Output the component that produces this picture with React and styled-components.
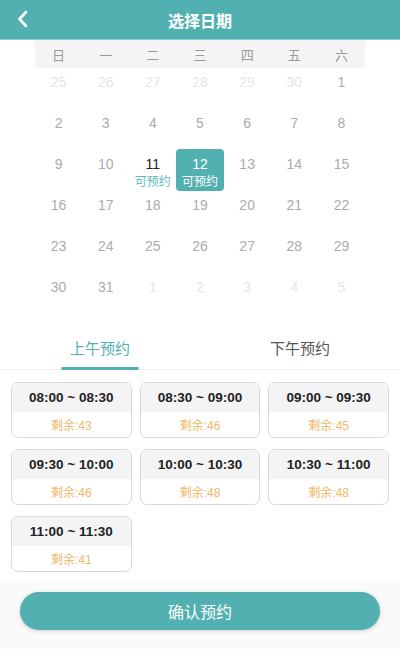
import React, { useState } from "react";
import styled, { createGlobalStyle } from "styled-components";

const GlobalStyle = createGlobalStyle`
  body {
    margin: 0;
    background: #fff;
    font-family: "Liberation Sans", "Noto Sans CJK SC", sans-serif;
  }
`;

const weekdays = ["日", "一", "二", "三", "四", "五", "六"];

const days = [
  [25, 26, 27, 28, 29, 30, 1],
  [2, 3, 4, 5, 6, 7, 8],
  [9, 10, 11, 12, 13, 14, 15],
  [16, 17, 18, 19, 20, 21, 22],
  [23, 24, 25, 26, 27, 28, 29],
  [30, 31, 1, 2, 3, 4, 5],
];

const slots = [
  ["08:00 ~ 08:30", 43],
  ["08:30 ~ 09:00", 46],
  ["09:00 ~ 09:30", 45],
  ["09:30 ~ 10:00", 46],
  ["10:00 ~ 10:30", 48],
  ["10:30 ~ 11:00", 48],
  ["11:00 ~ 11:30", 41],
];

const App = () => {
  const [tab, setTab] = useState(0);

  return (
    <Page>
      <GlobalStyle />
      <Header>
        <BackButton>
          <svg width="14" height="18" viewBox="0 0 14 18">
            <path
              d="M10 2 L3.5 9 L10 16"
              fill="none"
              stroke="#fff"
              strokeWidth="2.6"
              strokeLinecap="round"
              strokeLinejoin="round"
            />
          </svg>
        </BackButton>
        <Title>选择日期</Title>
      </Header>

      <Calendar>
        <WeekRow>
          {weekdays.map((w) => (
            <WeekDay key={w}>{w}</WeekDay>
          ))}
        </WeekRow>
        {days.map((row, r) => (
          <DayRow key={r}>
            {row.map((d, c) => {
              const other = (r === 0 && d > 7) || (r === 5 && d < 7);
              const available = r === 2 && (d === 11 || d === 12);
              const selected = r === 2 && d === 12;
              return (
                <DayCell key={c} $selected={selected}>
                  <DayNum $other={other} $available={available} $selected={selected}>
                    {d}
                  </DayNum>
                  {available && <DayTag $selected={selected}>可预约</DayTag>}
                </DayCell>
              );
            })}
          </DayRow>
        ))}
      </Calendar>

      <Tabs>
        {["上午预约", "下午预约"].map((t, i) => (
          <Tab key={t} $active={tab === i} onClick={() => setTab(i)}>
            {t}
          </Tab>
        ))}
      </Tabs>

      <SlotGrid>
        {slots.map(([time, left]) => (
          <SlotCard key={time}>
            <SlotTime>{time}</SlotTime>
            <SlotLeft>剩余:{left}</SlotLeft>
          </SlotCard>
        ))}
      </SlotGrid>

      <Footer>
        <ConfirmButton>确认预约</ConfirmButton>
      </Footer>
    </Page>
  );
};

export default App;

const Page = styled.div`
  width: 400px;
  min-height: 664px;
  background: #fff;
`;

const Header = styled.div`
  height: 40px;
  background: #52b1b0;
  display: flex;
  align-items: center;
  justify-content: center;
  position: relative;
  border-bottom: 1px solid #8ccccb;
  box-sizing: border-box;
`;

const BackButton = styled.div`
  position: absolute;
  left: 16px;
  top: 10px;
  display: flex;
`;

const Title = styled.div`
  color: #fff;
  font-size: 16px;
  font-weight: bold;
  font-family: "Noto Sans CJK SC", sans-serif;
`;

const Calendar = styled.div`
  width: 330px;
  margin: 0 auto;
`;

const WeekRow = styled.div`
  display: grid;
  grid-template-columns: repeat(7, 1fr);
  height: 28px;
  background: #f4f4f4;
  align-items: center;
`;

const WeekDay = styled.div`
  text-align: center;
  font-size: 13px;
  color: #9a9a9a;
  font-family: "Noto Sans CJK SC", sans-serif;
`;

const DayRow = styled.div`
  display: grid;
  grid-template-columns: repeat(7, 1fr);
  height: 41px;
`;

const DayCell = styled.div`
  display: flex;
  flex-direction: column;
  align-items: center;
  padding-top: 4px;
  margin-top: ${(p) => (p.$selected ? "-1px" : "0")};
  height: ${(p) => (p.$selected ? "42px" : "auto")};
  box-sizing: border-box;
  padding-top: ${(p) => (p.$selected ? "5px" : "4px")};
  border-radius: 4px;
  background: ${(p) => (p.$selected ? "#52b1b0" : "transparent")};
`;

const DayNum = styled.div`
  font-size: 14px;
  line-height: 20px;
  color: ${(p) =>
    p.$selected ? "#fff" : p.$available ? "#222" : p.$other ? "#e6e6e6" : "#ababab"};
`;

const DayTag = styled.div`
  font-size: 12px;
  line-height: 14px;
  color: ${(p) => (p.$selected ? "#fff" : "#5bbdbc")};
  font-family: "Noto Sans CJK SC", sans-serif;
`;

const Tabs = styled.div`
  margin-top: 12px;
  display: flex;
  height: 44px;
  border-bottom: 1px solid #eeeeee;
  box-sizing: border-box;
`;

const Tab = styled.div`
  flex: 1;
  display: flex;
  align-items: center;
  justify-content: center;
  position: relative;
  font-size: 15px;
  font-family: "Noto Sans CJK SC", sans-serif;
  color: ${(p) => (p.$active ? "#52b1b0" : "#555")};
  cursor: pointer;

  &::after {
    content: "";
    display: ${(p) => (p.$active ? "block" : "none")};
    position: absolute;
    bottom: -1px;
    left: 50%;
    transform: translateX(-50%);
    width: 77px;
    height: 3px;
    background: #52b1b0;
  }
`;

const SlotGrid = styled.div`
  display: grid;
  grid-template-columns: repeat(3, 1fr);
  column-gap: 8px;
  row-gap: 11px;
  padding: 12px 11px 0;
`;

const SlotCard = styled.div`
  border: 1px solid #d9d9d9;
  border-radius: 7px;
  overflow: hidden;
  height: 56px;
  box-sizing: border-box;
  display: flex;
  flex-direction: column;
`;

const SlotTime = styled.div`
  height: 29px;
  background: #f4f4f4;
  display: flex;
  align-items: center;
  justify-content: center;
  font-size: 13.5px;
  font-weight: bold;
  color: #222;
`;

const SlotLeft = styled.div`
  flex: 1;
  display: flex;
  align-items: center;
  justify-content: center;
  font-size: 12px;
  color: #efb866;
`;

const Footer = styled.div`
  margin-top: 9px;
  background: #fafafa;
  padding: 11px 20px 19px;
`;

const ConfirmButton = styled.button`
  width: 100%;
  height: 38px;
  border: none;
  border-radius: 19px;
  background: #52b1b0;
  color: #fff;
  font-size: 16px;
  font-family: "Noto Sans CJK SC", sans-serif;
  box-shadow: 0 1px 4px rgba(0, 0, 0, 0.18);
`;
